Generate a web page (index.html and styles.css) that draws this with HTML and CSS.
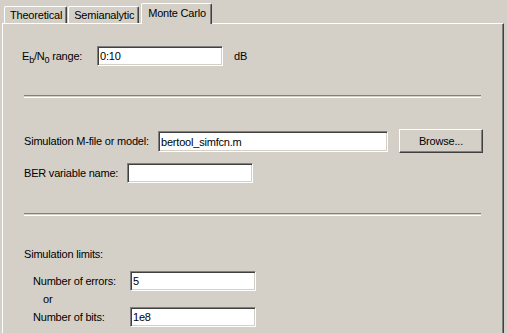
FILE: index.html
```html
<!DOCTYPE html>
<html lang="en">
<head>
  <meta charset="UTF-8">
  <title>BER Tool - Monte Carlo</title>
  <link rel="stylesheet" href="styles.css">
</head>
<body>
  <div class="tabs">
    <div class="tab">Theoretical</div>
    <div class="tab">Semianalytic</div>
    <div class="tab active">Monte Carlo</div>
  </div>

  <div class="panel">
    <div class="row row-eb">
      <label class="lbl lbl-eb">E<sub>b</sub>/N<sub>0</sub> range:</label>
      <div class="field w126">0:10</div>
      <span class="unit">dB</span>
    </div>

    <div class="sep sep-1"></div>

    <div class="row row-sim">
      <label class="lbl lbl-sim">Simulation M-file or model:</label>
      <div class="field w230">bertool_simfcn.m</div>
      <div class="button">Browse...</div>
    </div>

    <div class="row row-ber">
      <label class="lbl lbl-ber">BER variable name:</label>
      <div class="field w126"></div>
    </div>

    <div class="sep sep-2"></div>

    <div class="heading">Simulation limits:</div>

    <div class="row row-err">
      <label class="lbl lbl-lim">Number of errors:</label>
      <div class="field w126">5</div>
    </div>
    <div class="or">or</div>
    <div class="row row-bits">
      <label class="lbl lbl-lim">Number of bits:</label>
      <div class="field w126">1e8</div>
    </div>
  </div>
</body>
</html>
```

FILE: styles.css
```css
html, body { margin: 0; padding: 0; }
body {
  background: #d4d0c8;
  font-family: "Liberation Sans", Arial, sans-serif;
  font-size: 11px;
  letter-spacing: -0.2px;
  color: #000;
  width: 507px;
  height: 333px;
  overflow: hidden;
}

/* tab strip */
.tabs { display: flex; align-items: flex-end; height: 20px; padding: 3px 0 0 4px; }
.tab {
  height: 16px;
  line-height: 17px;
  padding: 0 4px 0 5px;
  border-top: 1px solid #fff;
  border-left: 1px solid #fff;
  border-right: 1px solid #404040;
  box-shadow: inset -1px 0 0 #808080;
  border-radius: 2px 2px 0 0;
  margin-right: 1px;
  white-space: nowrap;
}
.tab.active {
  height: 20px;
  line-height: 19px;
  padding: 0 5px 0 6px;
  margin-left: 1px;
  margin-bottom: -1px;
  position: relative;
  z-index: 1;
  background: #d4d0c8;
}

/* page body */
.panel {
  margin-left: 2px;
  width: 502px;
  height: 320px;
  box-sizing: border-box;
  border-top: 1px solid #fff;
  border-left: 1px solid #fff;
  border-right: 1px solid #404040;
  box-shadow: inset -1px 0 0 #808080;
  padding-left: 21px;
}

.row { display: flex; align-items: center; }
.lbl { white-space: nowrap; }
.lbl sub { font-size: 9px; vertical-align: -3px; line-height: 0; }

.field {
  height: 20px;
  line-height: 16px;
  box-sizing: border-box;
  background: #fff;
  border-top: 1px solid #808080;
  border-left: 1px solid #808080;
  border-bottom: 1px solid #fff;
  border-right: 1px solid #fff;
  box-shadow: inset 1px 1px 0 #404040, inset -1px -1px 0 #d4d0c8;
  padding: 1px 0 0 2px;
  white-space: nowrap;
}
.w126 { width: 126px; }
.w230 { width: 230px; height: 21px; line-height: 18px; }

.button {
  width: 84px;
  height: 24px;
  box-sizing: border-box;
  margin-left: 11px;
  border-top: 1px solid #fff;
  border-left: 1px solid #fff;
  border-right: 1px solid #404040;
  border-bottom: 1px solid #404040;
  box-shadow: inset -1px -1px 0 #808080;
  display: flex;
  align-items: center;
  justify-content: center;
}

.sep {
  width: 457px;
  height: 1px;
  border-top: 1px solid #808080;
  border-bottom: 1px solid #fff;
}

.row-eb { margin-top: 22px; margin-left: -2px; height: 20px; }
.lbl-eb { width: 75px; }
.unit { margin-left: 11px; }

.sep-1 { margin-top: 29px; }

.row-sim { margin-top: 31px; height: 24px; }
.lbl-sim { width: 134px; }

.row-ber { margin-top: 10px; height: 20px; }
.lbl-ber { width: 103px; }

.sep-2 { margin-top: 30px; }

.heading { margin-top: 31px; height: 14px; line-height: 14px; }

.row-err { margin-top: 10px; height: 20px; padding-left: 9px; }
.lbl-lim { width: 97px; }
.or { padding-left: 19px; height: 16px; line-height: 16px; }
.row-bits { height: 20px; padding-left: 9px; }
```
